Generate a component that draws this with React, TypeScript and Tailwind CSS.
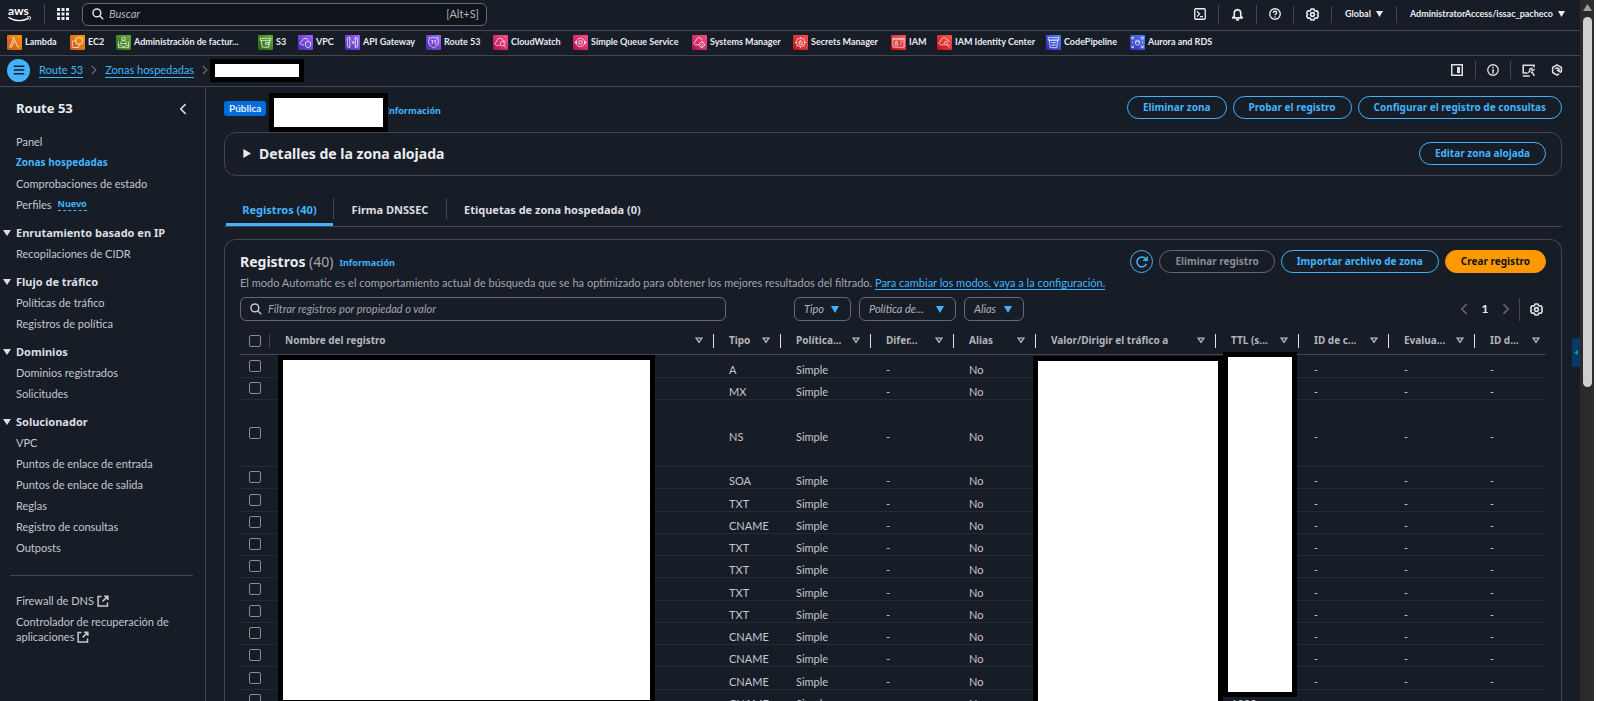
import type { ReactNode } from 'react';

type IconProps = { children: ReactNode; className?: string };

function Stroke({ children, className = 'size-3' }: IconProps) {
  return (
    <svg viewBox="0 0 16 16" className={className} fill="none" stroke="currentColor" strokeWidth="2" aria-hidden="true">
      {children}
    </svg>
  );
}

const Gear = () => (
  <Stroke className="size-[13px]">
    <path d="M6.2 1.2h3.6l.6 1.9 1.2.7 2-.4 1.8 3-1.4 1.6 1.4 1.6-1.8 3-2-.4-1.2.7-.6 1.9H6.2l-.6-1.9-1.2-.7-2 .4-1.8-3L2 8 .6 6.4l1.8-3 2 .4 1.2-.7z" strokeWidth="1.9" strokeLinejoin="round" />
    <circle cx="8" cy="8" r="2.3" strokeWidth="2" />
  </Stroke>
);

const Search = () => (
  <Stroke className="size-3 shrink-0">
    <circle cx="6.5" cy="6.5" r="5.2" strokeWidth="2" />
    <path d="M10.3 10.300l4.700 4.700" strokeWidth="2" />
  </Stroke>
);

const Chevron = ({ left = false, className = 'size-3' }: { left?: boolean; className?: string }) => (
  <Stroke className={className}>
    <path d={left ? 'M11.5 1.5 5 8l6.5 6.5' : 'M4.5 1.5 11 8l-6.5 6.5'} />
  </Stroke>
);

const External = () => (
  <Stroke className="ml-[3px] inline size-3 align-[-2px]">
    <path d="M6 2H1.5v12.5H14V10M9.5 1.5h5v5M14.5 1.5 7.5 8.5" />
  </Stroke>
);

const Down = ({ className }: { className: string }) => (
  <svg viewBox="0 0 8 7" className={className} fill="currentColor" preserveAspectRatio="none" aria-hidden="true">
    <path d="M0 0h8L4 7z" />
  </svg>
);

/* Service tiles of the favourites bar */

const glyphs: Record<string, ReactNode> = {
  lambda: <path d="M5 3h2.200l4 9.500h2M7.700 6.500 4.800 13H2.800l4-8.500" />,
  ec2: (
    <>
      <rect x="6.5" y="3" width="6.5" height="6.5" rx="1" />
      <path d="M9.5 9.5v3a.8.8 0 0 1-.8.8H3.3a.8.8 0 0 1-.8-.8V7.2a.8.8 0 0 1 .8-.8h3.2" />
    </>
  ),
  billing: (
    <>
      <circle cx="8" cy="4" r="1.8" />
      <path d="M4.8 9.2c0-4.4 6.4-4.4 6.4 0zM2.5 7v6.5h11V7M2.5 11h3l1.2 1.2h2.6L10.500 11h3" />
    </>
  ),
  s3: (
    <>
      <path d="M2.500 3.500h11v2.200h-11zM3.500 5.700 4.500 13h7l1-7.300" />
      <path d="M8 8h3.500v2H8z" />
    </>
  ),
  vpc: (
    <>
      <path d="M6.500 10.500H4.300C1.500 10.300 1.800 7 4.200 7 4.200 2.800 9.800 2.500 10.300 6" />
      <path d="M8 7.800l2.800-1 2.700 1v3c0 1.300-1.200 2.200-2.700 2.800C9.200 13 8 12 8 10.800z" />
    </>
  ),
  api: (
    <>
      <path d="M2.500 3.500 5 2.500v11l-2.500-1zM13.500 3.500 11 2.500v11l2.500-1zM5 4.500h1M10 4.500h1M5 11.500h1M10 11.500h1" />
      <path d="M7 6.500 8.800 8 7 9.500M9.200 6.500v3" />
    </>
  ),
  route53: (
    <>
      <path d="M8 2.200 10 3.300l2.500-.5.500 3.200c1 4-2 6-5 7.800-3-1.800-6-3.800-5-7.800l.5-3.200 2.500.5z" />
      <path d="M5.500 6h2L6.500 7.500c1.500.5.500 2.500-1 1.800M10.800 6H9.300v1.500c2.200 0 1.700 2.500 0 1.900" />
    </>
  ),
  cloudwatch: (
    <>
      <path d="M7 11H4.300C1.500 10.800 1.600 7.500 4 7.200 4.300 2.500 10 2.500 10.700 5.800c1.300 0 2.300.8 2.300 2" />
      <circle cx="10" cy="9.300" r="2.300" />
      <path d="M11.700 11l2 2.300" />
    </>
  ),
  sqs: (
    <>
      <circle cx="8" cy="8" r="4.500" />
      <path d="M6.300 6.300h3.400v3.400H6.300zM1.800 8h2.500M11.700 8h2.500M3 6.500v3M13 6.500v3" />
    </>
  ),
  systems: (
    <>
      <path d="M7 10.500H4.300C1.500 10.300 1.600 7 4 6.700 4.300 2 10 2 10.700 5.500" />
      <circle cx="10.500" cy="10.300" r="2.700" />
      <path d="M10.500 6.800v1M10.500 12.800v1M7 10.300h1M13 10.300h1M9.500 10.300l.8.800 1.400-1.600" />
    </>
  ),
  secrets: (
    <>
      <circle cx="8" cy="8" r="4.300" />
      <path d="M6.300 7.500h3.400v2.700H6.300zM7 7.300c0-2 2-2 2 0M8 2v1.700M8 12.300V14M2 8h1.700M12.300 8H14M3.700 3.700 5 5M11 11l1.300 1.300M12.300 3.700 11 5M5 11l-1.300 1.300" />
    </>
  ),
  iam: (
    <>
      <path d="M2 3.500h12v9.500H2zM2 5h12M9.800 7.500h2.500M9.800 10h1.500M4 11V9.500c0-1 3.500-1 3.500 0V11z" />
      <circle cx="5.700" cy="7.500" r="1" />
    </>
  ),
  identity: (
    <>
      <path d="M7 10.500H4.300C1.500 10.300 1.600 7 4 6.700 4.300 2 10 2 10.700 5.500c1.400 0 2.400.9 2.400 2" />
      <circle cx="9.300" cy="8.800" r="1.800" />
      <path d="M10.600 10.100l3 3.100M12 11.500l1-1" />
    </>
  ),
  pipeline: (
    <>
      <path d="M2.500 2.800h11v2.700h-11zM3.500 5.500h9l-1 8h-7zM5.500 8h5" />
      <path d="M6.500 9.700v2M8 9.700v2M9.500 9.700v2" />
    </>
  ),
  aurora: (
    <>
      <path d="M2 5V2.500h2.500M11.500 2.500H14V5M14 11v2.500h-2.500M4.500 13.500H2V11M2.200 2.700 4.500 5M13.800 2.700 11.500 5M2.200 13.300 4.500 11M13.800 13.300 11.500 11" />
      <path d="M5.800 6.500c0-1.200 4.400-1.200 4.400 0v3.200c0 1.200-4.400 1.200-4.400 0zM5.800 6.500c0 1.200 4.400 1.200 4.400 0M2 7l1.300 1L2 9M14 7l-1.300 1L14 9" />
    </>
  ),
};

const orange = 'bg-linear-to-tr from-[#c8511b] to-[#ff9900]';
const green = 'bg-linear-to-tr from-[#1b660f] to-[#6cae3e]';
const purple = 'bg-linear-to-tr from-[#4d27aa] to-[#a166ff]';
const pink = 'bg-linear-to-tr from-[#b0084d] to-[#ff4f8b]';
const red = 'bg-linear-to-tr from-[#bd0816] to-[#ff5252]';
const blue = 'bg-linear-to-tr from-[#2e27ad] to-[#527fff]';

const favourites: [string, string, string][] = [
  ['lambda', 'Lambda', orange],
  ['ec2', 'EC2', orange],
  ['billing', 'Administración de factur...', green],
  ['s3', 'S3', green],
  ['vpc', 'VPC', purple],
  ['api', 'API Gateway', purple],
  ['route53', 'Route 53', purple],
  ['cloudwatch', 'CloudWatch', pink],
  ['sqs', 'Simple Queue Service', pink],
  ['systems', 'Systems Manager', pink],
  ['secrets', 'Secrets Manager', red],
  ['iam', 'IAM', red],
  ['identity', 'IAM Identity Center', red],
  ['pipeline', 'CodePipeline', blue],
  ['aurora', 'Aurora and RDS', blue],
];

const navSections: { title: string; links: string[] }[] = [
  { title: 'Enrutamiento basado en IP', links: ['Recopilaciones de CIDR'] },
  { title: 'Flujo de tráfico', links: ['Políticas de tráfico', 'Registros de política'] },
  { title: 'Dominios', links: ['Dominios registrados', 'Solicitudes'] },
  {
    title: 'Solucionador',
    links: ['VPC', 'Puntos de enlace de entrada', 'Puntos de enlace de salida', 'Reglas', 'Registro de consultas', 'Outposts'],
  },
];

const columns: [string, string][] = [
  ['Nombre del registro', 'w-auto'],
  ['Tipo', 'w-[67px]'],
  ['Política...', 'w-[90px]'],
  ['Difer...', 'w-[83px]'],
  ['Alias', 'w-[82px]'],
  ['Valor/Dirigir el tráfico a', 'w-[180px]'],
  ['TTL (s...', 'w-[83px]'],
  ['ID de c...', 'w-[90px]'],
  ['Evalua...', 'w-[86px]'],
  ['ID d...', 'w-[71px]'],
];

const recordTypes = ['A', 'MX', 'NS', 'SOA', 'TXT', 'CNAME', 'TXT', 'TXT', 'TXT', 'TXT', 'CNAME', 'CNAME', 'CNAME', 'CNAME'];

function TopBar() {
  return (
    <header className="flex h-[31px] shrink-0 items-center border-b border-[#424650] pb-[2px]">
      <a href="#" aria-label="AWS" className="ml-2 text-white">
        <svg viewBox="0 0 24 16" className="h-4 w-6 overflow-visible" aria-hidden="true">
          <text x="0" y="8.500" fontSize="12" fontWeight="700" fontFamily="Lato, sans-serif" fill="currentColor">aws</text>
          <path d="M.5 11.300c6 4.300 14.500 4.300 20.300.9" fill="none" stroke="currentColor" strokeWidth="1.400" />
          <path d="M19 11c1.500-.4 3-.4 3.600 0 .2.800-.3 2.200-1.200 3.300" fill="none" stroke="currentColor" strokeWidth="1" />
        </svg>
      </a>
      <span className="ml-3 h-5 w-px bg-[#424650]" />
      <button aria-label="Servicios" className="ml-3 text-[#ebebf0]">
        <svg viewBox="0 0 12 12" className="size-3" fill="currentColor" aria-hidden="true">
          {[0, 4.5, 9].map((y) => [0, 4.5, 9].map((x) => <rect key={`${x}-${y}`} x={x} y={y} width="3" height="3" />))}
        </svg>
      </button>
      <label className="ml-[13px] flex h-[23px] w-[405px] items-center gap-[5px] rounded-md border border-[#656871] bg-[#0f141a] pr-[7px] pl-[9px] text-[#dedee3]">
        <Search />
        <input aria-label="Buscar" placeholder="Buscar" className="min-w-0 flex-1 bg-transparent text-[11px] italic outline-none placeholder:text-[#b4b4bb]" />
        <span className="text-[11px] text-[#b4b4bb]">[Alt+S]</span>
      </label>
      <div className="ml-auto flex items-center text-[#ebebf0]">
        <button aria-label="CloudShell" className="px-3">
          <Stroke>
            <rect x="1" y="1" width="14" height="14" rx="1.500" strokeWidth="1.800" />
            <path d="M4 4.500 7.500 8 4 11.500M8 11.500h4" strokeWidth="1.700" />
          </Stroke>
        </button>
        <span className="h-[19px] w-px bg-[#424650]" />
        <button aria-label="Notificaciones" className="px-3">
          <Stroke className="size-[13px]">
            <path d="M8 1v1M4 10V6c0-5 8-5 8 0v4l2 2.200H2z" strokeLinejoin="round" />
            <path d="M6 14.500h4" />
          </Stroke>
        </button>
        <span className="h-[19px] w-px bg-[#424650]" />
        <button aria-label="Ayuda" className="px-3">
          <Stroke>
            <circle cx="8" cy="8" r="7" strokeWidth="1.800" />
            <path d="M5.800 6.500c0-3 4.400-2.800 4.400-.2C10.200 8 8 8 8 9.800M8 11v1.700" strokeWidth="1.800" />
          </Stroke>
        </button>
        <span className="h-[17px] w-px bg-[#424650]" />
        <button aria-label="Configuración" className="px-3">
          <Gear />
        </button>
        <span className="h-[17px] w-px bg-[#424650]" />
        <button className="flex items-center gap-[5px] pr-[13px] pl-[13px] text-[9px] font-bold">
          Global
          <Down className="h-[6px] w-[7px]" />
        </button>
        <span className="h-[17px] w-px bg-[#424650]" />
        <button className="flex items-center gap-[5px] pr-[15px] pl-[13px] text-[9px] font-bold">
          AdministratorAccess/issac_pacheco
          <Down className="h-[6px] w-[7px]" />
        </button>
      </div>
    </header>
  );
}

function Favourites() {
  return (
    <nav aria-label="Favoritos" className="grid h-[25px] shrink-0 grid-cols-[63px_46px_142px_40px_47px_81px_67px_80px_119px_101px_98px_46px_109px_84px_90px] items-center overflow-hidden border-b border-[#424650] pb-[2px] pl-[7px]">
      {favourites.map(([id, name, tile]) => (
        <a key={id} href="#" className="flex items-center gap-[3px] text-[9px] font-bold whitespace-nowrap text-[#ebebf0]">
          <span className={`flex size-[15px] shrink-0 rounded-[1px] ${tile}`}>
            <svg viewBox="0 0 16 16" className="size-[15px]" fill="none" stroke="#ffffff" strokeOpacity="0.85" strokeWidth="0.9" aria-hidden="true">
              {glyphs[id]}
            </svg>
          </span>
          {name}
        </a>
      ))}
    </nav>
  );
}

function Breadcrumbs() {
  const link = 'border-b border-[#42b4ff] text-[11px] leading-[14px] text-[#42b4ff]';
  return (
    <div className="flex h-[31px] shrink-0 items-center border-b border-[#424650] pb-[2px] pl-[7px]">
      <button aria-label="Abrir navegación" className="flex size-[23px] items-center justify-center rounded-full bg-[#42b4ff] text-[#161d26]">
        <Stroke className="size-3">
          <path d="M1 3h14M1 8h14M1 13h14" />
        </Stroke>
      </button>
      <nav aria-label="Ruta" className="ml-[9px] flex items-center text-[#656871]">
        <a href="#" className={link}>Route 53</a>
        <span className="px-[6px]"><Chevron className="size-[10px]" /></span>
        <a href="#" className={link}>Zonas hospedadas</a>
        <span className="pl-[6px]"><Chevron className="size-[10px]" /></span>
        <span className="h-[23px] w-[94px] border-[5px] border-black bg-white" />
      </nav>
      <div className="ml-auto flex items-center pr-[17px] text-[#dedee3]">
        <button aria-label="Panel dividido" className="pr-3">
          <Stroke>
            <rect x="1" y="1" width="14" height="14" />
            <rect x="8" y="4" width="4" height="8" fill="currentColor" stroke="none" />
          </Stroke>
        </button>
        <span className="h-[18px] w-px bg-[#424650]" />
        <button aria-label="Información" className="px-[11px]">
          <Stroke>
            <circle cx="8" cy="8" r="7" strokeWidth="1.700" />
            <path d="M8 7v5.500M8 3.500v2" />
          </Stroke>
        </button>
        <span className="h-[18px] w-px bg-[#424650]" />
        <button aria-label="Herramientas" className="px-[11px]">
          <Stroke className="size-[13px]">
            <path d="M14.800 4V1.500H1.500v9.500H7M1 14.800h8.500" strokeWidth="1.900" />
            <path d="M15.500 6.200 13 8l-1.800-1.600M13 5.200C10 4.500 8.600 6.800 9.600 9l-1.800 1.600M11 10.500l1.600-.3 2.600 4.400" strokeWidth="1.700" />
          </Stroke>
        </button>
        <button aria-label="Amazon Q" className="pl-[5px]">
          <Stroke>
            <path d="M13.800 10.800V4.700L8 1.300 2.200 4.700v6.600L8 14.700l2.800-1.600" />
            <path d="M5.500 6.500 8 5l2.600 1.500v2.700M8 8l5.800 3.400" />
          </Stroke>
        </button>
      </div>
    </div>
  );
}

const strong = "font-['Noto_Sans','Open_Sans',sans-serif] font-bold";

function SideNav() {
  const item = 'block leading-[21px] text-[#c6c6cd]';
  return (
    <aside className="w-[206px] shrink-0 border-r border-[#424650] text-[11px]">
      <div className="flex h-11 items-center justify-between pr-4 pb-px pl-4">
        <h2 className={`text-[13px] text-[#ebebf0] ${strong}`}>Route 53</h2>
        <button aria-label="Cerrar navegación" className="text-[#dedee3]"><Chevron left /></button>
      </div>
      <div className="pl-4">
        <a href="#" className={item}>Panel</a>
        <a href="#" className={`block text-[10px] leading-[21px] text-[#42b4ff] ${strong}`}>Zonas hospedadas</a>
        <a href="#" className={item}>Comprobaciones de estado</a>
        <span className="flex items-center gap-[6px]">
          <a href="#" className={item}>Perfiles</a>
          <button className={`border-b border-dashed border-[#42b4ff] text-[9px] leading-3 text-[#42b4ff] ${strong}`}>Nuevo</button>
        </span>
      </div>
      {navSections.map((s) => (
        <section key={s.title} className="mt-[6px]">
          <button className={`flex h-[22px] items-center gap-[5px] pt-[2px] pl-[3px] text-[11px] whitespace-nowrap text-[#dedee3] ${strong}`}>
            <Down className="h-[6px] w-2" />
            {s.title}
          </button>
          <div className="pl-4">
            {s.links.map((l) => (
              <a key={l} href="#" className={item}>{l}</a>
            ))}
          </div>
        </section>
      ))}
      <hr className="mt-[17px] mr-3 ml-[10px] border-[#424650]" />
      <div className="mt-[14px] px-4">
        <a href="#" className={item}>Firewall de DNS<External /></a>
        <a href="#" className="mt-[3px] block leading-[15px] text-[#c6c6cd]">Controlador de recuperación de aplicaciones<External /></a>
      </div>
    </aside>
  );
}

const pillBase = `h-[23px] rounded-full px-[15px] text-[10px] whitespace-nowrap border ${strong}`;
const pill = `${pillBase} border-[#42b4ff] text-[#42b4ff]`;

function Filter({ label, width }: { label: string; width: string }) {
  return (
    <span className={`relative flex items-center ${width}`}>
      <select aria-label={label} className="h-6 w-full appearance-none rounded-md border border-[#656871] bg-transparent pl-[9px] text-[11px] text-[#b4b4bb] italic">
        <option>{label}</option>
      </select>
      <Down className="pointer-events-none absolute right-[12px] h-[7px] w-2 text-[#42b4ff]" />
    </span>
  );
}

function Check({ label }: { label: string }) {
  return <input type="checkbox" aria-label={label} className="block size-3 appearance-none rounded-[2px] border border-[#8c8c94]" />;
}

function RecordsTable() {
  const cell = 'border-b border-[#232b37] py-0 pt-[6px] pl-[15px] leading-[15px] text-[#c6c6cd]';
  return (
    <table className="w-full table-fixed border-separate border-spacing-0 text-left text-[11px]">
      <thead>
        <tr className="h-[34px]">
          <th className="w-[30px] border-b border-[#424650] p-0 pt-[6px]">
            <div className="flex h-[14px] items-center border-r border-[#424650] pl-[9px]">
              <Check label="Seleccionar todo" />
            </div>
          </th>
          {columns.map(([name, width], i) => (
            <th key={name} className={`${width} border-b border-[#424650] p-0 pt-[6px] text-[10px] text-[#b4b4bb] ${strong}`}>
              <div className={`flex h-[14px] items-center justify-between pl-[15px] ${i < columns.length - 1 ? 'border-r border-[#dedee3] pr-[10px]' : 'pr-[6px]'}`}>
                <span className="whitespace-nowrap">{name}</span>
                <svg viewBox="0 0 9 7" className="h-[7px] w-2 shrink-0" fill="none" stroke="currentColor" strokeWidth="1.500" aria-hidden="true">
                  <path d="M1.300.9h6.400L4.500 5.600z" />
                </svg>
              </div>
            </th>
          ))}
        </tr>
      </thead>
      <tbody>
        {recordTypes.map((type, i) => (
          <tr key={i} className={type === 'NS' ? 'h-[67px]' : 'h-[22px] nth-[4n+1]:h-[23px]'}>
            <td className="border-b border-[#232b37] p-0 pb-px pl-[9px]">
              <Check label={`Seleccionar ${type} ${i + 1}`} />
            </td>
            <td className={`${cell} relative`}>
              {i === 0 && <div className="absolute top-0 right-[59px] left-2 z-10 h-[346px] border-[5px] border-b-[1px] border-black bg-white" />}
            </td>
            <td className={cell}>{type}</td>
            <td className={cell}>Simple</td>
            <td className={cell}>-</td>
            <td className={cell}>No</td>
            <td className={`${cell} relative`}>
              {i === 0 && <div className="absolute top-px -right-[7px] -left-[3px] z-10 h-[360px] border-[5px] border-black bg-white" />}
            </td>
            <td className={`${cell} relative`}>
              {i === 0 && <div className="absolute -top-[3px] right-[2px] left-[7px] z-20 h-[345px] border-[5px] border-black bg-white" />}
              {i === recordTypes.length - 1 && '1800'}
            </td>
            <td className={cell}>-</td>
            <td className={cell}>-</td>
            <td className={cell}>-</td>
          </tr>
        ))}
      </tbody>
    </table>
  );
}

function Content() {
  return (
    <main className="min-w-0 flex-1 overflow-hidden pr-[18px] pl-[18px]">
      <div className="flex h-[45px] items-start">
        <span className="mt-[14px] rounded-[3px] bg-[#006ce0] px-[5px] text-[10px] leading-[15px] font-bold text-[#ebebf0]">Pública</span>
        <div className="relative z-10 mt-[6px] ml-[3px] h-[39px] w-[119px] border-[5px] border-black bg-white" />
        <a href="#" className={`-ml-[3px] pt-4 text-[9px] leading-[15px] text-[#42b4ff] ${strong}`}>Información</a>
        <div className="mt-[9px] ml-auto flex gap-[6px]">
          <button className={pill}>Eliminar zona</button>
          <button className={pill}>Probar el registro</button>
          <button className={pill}>Configurar el registro de consultas</button>
        </div>
      </div>

      <section className="flex h-11 items-center justify-between rounded-xl border border-[#424650] pr-[15px] pb-px pl-[18px]">
        <button className={`flex items-center gap-[8px] text-[14px] text-[#ebebf0] ${strong}`}>
          <svg viewBox="0 0 8 9" className="h-[9px] w-2" fill="currentColor" aria-hidden="true"><path d="M.4 0v9L8 4.500z" /></svg>
          Detalles de la zona alojada
        </button>
        <button className={pill}>Editar zona alojada</button>
      </section>

      <div role="tablist" className={`mt-[18px] flex h-[33px] border-b border-[#424650] text-[11px] text-[#dedee3] ${strong}`}>
        <button role="tab" aria-selected="true" className="ml-[2px] flex w-[107px] items-center justify-center border-b-[3px] border-[#42b4ff] pt-[3px] text-[#42b4ff]">Registros (40)</button>
        <span className="mt-[4px] h-[21px] w-px bg-[#424650]" />
        <button role="tab" aria-selected="false" className="w-[112px]">Firma DNSSEC</button>
        <span className="mt-[4px] h-[21px] w-px bg-[#424650]" />
        <button role="tab" aria-selected="false" className="px-[17px]">Etiquetas de zona hospedada (0)</button>
      </div>

      <section className="mt-3 rounded-t-xl border border-b-0 border-[#424650] px-[15px] pt-[10px]">
        <div className="flex h-[23px] items-center">
          <h2 className={`text-[14px] text-[#ebebf0] ${strong}`}>
            Registros <span className="font-normal text-[#a4a4ad]">(40)</span>
          </h2>
          <a href="#" className={`ml-[6px] pt-[2px] text-[9px] text-[#42b4ff] ${strong}`}>Información</a>
          <div className="ml-auto flex gap-[6px]">
            <button aria-label="Actualizar" className="flex size-[23px] items-center justify-center rounded-full border border-[#42b4ff] text-[#42b4ff]">
              <Stroke className="size-3">
                <path d="M13.800 10.500A6.500 6.500 0 1 1 13 4l1.500 1.500M14.800.5v5.300H9.500" />
              </Stroke>
            </button>
            <button disabled className={`${pillBase} border-[#656871] text-[#8c8c94]`}>Eliminar registro</button>
            <button className={pill}>Importar archivo de zona</button>
            <button className={`${pillBase} border-[#ff9900] bg-[#ff9900] text-[#0f141a]`}>Crear registro</button>
          </div>
        </div>
        <p className="mt-px text-[11px] leading-[17px] text-[#a4a4ad]">
          El modo Automatic es el comportamiento actual de búsqueda que se ha optimizado para obtener los mejores resultados del filtrado.{' '}
          <a href="#" className="border-b border-[#42b4ff] text-[#42b4ff]">Para cambiar los modos, vaya a la configuración.</a>
        </p>
        <div className="mt-[6px] flex items-center">
          <label className="flex h-6 w-[486px] items-center gap-[6px] rounded-md border border-[#656871] px-[9px] text-[#c6c6cd]">
            <Search />
            <input aria-label="Filtrar registros" placeholder="Filtrar registros por propiedad o valor" className="min-w-0 flex-1 bg-transparent text-[11px] italic outline-none placeholder:text-[#a4a4ad]" />
          </label>
          <div className="ml-[68px] flex gap-2">
            <Filter label="Tipo" width="w-[57px]" />
            <Filter label="Política de..." width="w-[97px]" />
            <Filter label="Alias" width="w-[60px]" />
          </div>
          <div className="ml-auto flex items-center pr-[3px] text-[#656871]">
            <button aria-label="Página anterior"><Chevron left /></button>
            <button className="w-[30px] text-[12px] font-bold text-[#ebebf0]">1</button>
            <button aria-label="Página siguiente"><Chevron /></button>
            <span className="mr-[10px] ml-[7px] h-[23px] w-px bg-[#424650]" />
            <button aria-label="Preferencias" className="text-[#dedee3]"><Gear /></button>
          </div>
        </div>
        <RecordsTable />
      </section>
    </main>
  );
}

export default function App() {
  return (
    <div className="flex h-screen overflow-hidden bg-[#161d26] pr-[3px] font-['Lato','Open_Sans',sans-serif] [box-shadow:inset_-3px_0_0_#ffffff]">
      <div className="relative flex min-w-0 flex-1 flex-col">
        <TopBar />
        <Favourites />
        <Breadcrumbs />
        <div className="flex min-h-0 flex-1 overflow-hidden">
          <SideNav />
          <Content />
        </div>
        <button aria-label="Abrir panel lateral" className="absolute top-[338px] right-0 flex h-[29px] w-2 items-center justify-center rounded-l-[2px] bg-[#0a3866] text-[#0d9c8c]">
          <svg viewBox="0 0 4 5" className="h-[5px] w-1" fill="currentColor" aria-hidden="true"><path d="M4 0v5L0 2.500z" /></svg>
        </button>
      </div>
      <div className="flex w-[14px] shrink-0 flex-col items-center bg-[#2b2b2b]" aria-hidden="true">
        <svg viewBox="0 0 9 7" className="mt-1 h-[7px] w-[9px]" fill="#9f9f9f"><path d="M4.500 0 9 7H0z" /></svg>
        <span className="mt-[6px] h-[370px] w-[9px] rounded-full bg-[#d0d0d0]" />
      </div>
    </div>
  );
}
